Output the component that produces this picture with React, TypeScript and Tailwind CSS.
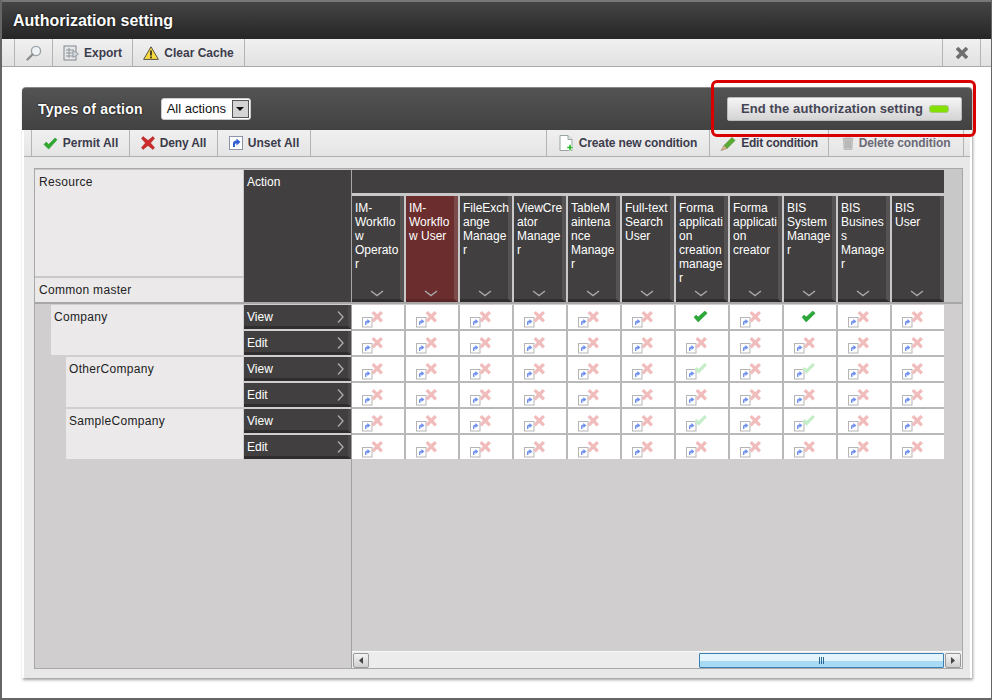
const columns = [
  "IM-Workflow Operator",
  "IM-Workflow User",
  "FileExchange Manager",
  "ViewCreator Manager",
  "TableMaintenance Manager",
  "Full-text Search User",
  "Forma application creation manager",
  "Forma application creator",
  "BIS System Manager",
  "BIS Business Manager",
  "BIS User",
];

const tree = [
  { name: "Company", indent: "ml-[16px]" },
  { name: "OtherCompany", indent: "ml-[31px]" },
  { name: "SampleCompany", indent: "ml-[31px]" },
];

const CheckIcon = ({ className = "" }: { className?: string }) => (
  <svg viewBox="0 0 16 14" className={className}>
    <path d="M1 8l2.5-2.5L6 8l7-7 2 2-9 10z" fill="#2eaa2e" stroke="#1f8a24" strokeWidth="0.6" strokeLinejoin="round" />
  </svg>
);

const CrossIcon = ({ className = "" }: { className?: string }) => (
  <svg viewBox="0 0 14 14" className={className}>
    <path d="M2 0.5L7 4.5 12 0.5 13.5 2.5 9.5 7 13.5 11.5 12 13.5 7 9.5 2 13.5 0.5 11.5 4.5 7 0.5 2.5z" fill="#cc2a2a" stroke="#a81c1c" strokeWidth="0.5" />
  </svg>
);

const UnsetIcon = ({ className = "" }: { className?: string }) => (
  <svg viewBox="0 0 14 14" className={className}>
    <rect x="0.5" y="0.5" width="13" height="13" fill="#fff" stroke="#8d93a8" />
    <path d="M4 11V7.5C4 5.5 5.5 4.5 7.5 4.5V2.5L11.5 6 7.5 9.5V7.2C6.4 7.2 6 8 6 9v2z" fill="#2f5fd0" />
  </svg>
);

const Cell = ({ state }: { state: string }) => (
  <div className="w-[52px] h-[24px] bg-white pl-[10px] pt-[6px]">
    <svg viewBox="0 0 24 17" className="w-[24px] h-[17px]">
      {state !== "check" && (
        <>
          <rect x="0.5" y="6.5" width="9.5" height="9.5" fill="#fff" stroke="#b5b5b5" />
          <path d="M3 14v-2.4c0-1.5 1-2.2 2.4-2.2V8L8.4 10.6 5.4 13v-1.6c-.8 0-1 .5-1 1.2V14z" fill="#6f90f0" />
        </>
      )}
      {state === "x" && (
        <path d="M9.5 2.2L11.8 0 15.2 3.2 18.6 0 21 2.2 17.6 5.6 21 9.2 18.6 11.4 15.2 8 11.8 11.4 9.5 9.2 12.9 5.6z" fill="#f0bcbc" />
      )}
      {state === "faint" && (
        <path d="M8.5 6.2L10.6 4 12.6 6 18.6 0 21 2 12.6 10.8z" fill="#c4eec8" />
      )}
      {state === "check" && (
        <path d="M8 6.2L10.2 4 12.2 6 18.8 0 21.2 2.2 12.2 11z" fill="#2aa838" stroke="#1c8c2c" strokeWidth="0.5" />
      )}
    </svg>
  </div>
);

const cellState = (row: number, col: number) => {
  if (col !== 6 && col !== 8) return "x";
  if (row === 0) return "check";
  if (row === 2 || row === 4) return "faint";
  return "x";
};

const ToolItem = ({ icon, label, className = "" }: { icon: React.ReactNode; label?: string; className?: string }) => (
  <div className={`h-full flex items-center justify-center gap-[5px] border-r border-[#b4b4b4] text-[12px] font-bold text-[#3c3c4c] ${className}`}>
    {icon}
    {label && <span>{label}</span>}
  </div>
);

const ActionButton = ({ label }: { label: string }) => (
  <div className="w-[107px] h-[24px] bg-[#413f40] border-b-[3px] border-r-[3px] border-b-[#2f2d2e] border-r-[#4c4a4b] flex items-center justify-between pl-[3px] pr-[4px] pt-[2px] text-[12px] text-white">
    <span>{label}</span>
    <svg viewBox="0 0 7 12" className="w-[7px] h-[12px]">
      <path d="M1 0.5L6 6 1 11.5" fill="none" stroke="#a9a9a9" strokeWidth="1.4" />
    </svg>
  </div>
);

export default function App() {
  return (
    <div className="w-[992px] h-[700px] flex flex-col bg-white border-l-2 border-r border-b-2 border-[#666] overflow-hidden font-['Liberation_Sans',Arial,sans-serif]">
      {/* window title */}
      <div className="h-[39px] shrink-0 bg-gradient-to-b from-[#454545] to-[#262626] border-t-2 border-[#777] flex items-center pl-[11px] text-[16px] font-bold text-white [text-shadow:0_0_2px_#000]">
        Authorization setting
      </div>

      {/* window toolbar */}
      <div className="h-[28px] shrink-0 bg-gradient-to-b from-[#f0f0f0] to-[#e2e2e2] border-b border-[#aaa] flex pl-[12px]">
        <ToolItem
          className="w-[39px] border-l"
          icon={
            <svg viewBox="0 0 16 16" className="w-[16px] h-[16px]">
              <circle cx="10" cy="6" r="4.6" fill="#eef2f5" stroke="#9aa3a8" strokeWidth="1.4" />
              <path d="M6.5 9.5L1.5 14.5" stroke="#8e8e8e" strokeWidth="2.4" strokeLinecap="round" />
            </svg>
          }
        />
        <ToolItem
          className="w-[80px]"
          label="Export"
          icon={
            <svg viewBox="0 0 16 16" className="w-[16px] h-[16px]">
              <rect x="1" y="1" width="12" height="14" fill="#e8e8e8" stroke="#808890" />
              <path d="M3 5h8M3 8h8M3 11h8M6 3v10" stroke="#8c949c" />
              <path d="M10 5.5L15.5 9 10 12.5z" fill="#d6dade" stroke="#7c848c" strokeWidth="0.7" />
            </svg>
          }
        />
        <ToolItem
          className="w-[112px]"
          label="Clear Cache"
          icon={
            <svg viewBox="0 0 16 14" className="w-[16px] h-[14px]">
              <path d="M8 0.8L15.4 13.4H0.6z" fill="#f7d83e" stroke="#55534a" strokeLinejoin="round" />
              <path d="M8 4.5v5M8 10.6v1.6" stroke="#222" strokeWidth="1.6" />
            </svg>
          }
        />
        <div className="flex-1" />
        <ToolItem
          className="w-[39px] border-l mr-[10px]"
          icon={
            <svg viewBox="0 0 14 14" className="w-[14px] h-[14px]">
              <path d="M2 2l10 10M12 2L2 12" stroke="#6e6e6e" strokeWidth="3.6" />
            </svg>
          }
        />
      </div>

      {/* page body */}
      <div className="flex-1 pt-[20px] pl-[20px] pr-[19px] pb-[20px]">
        <div className="relative h-[591px] flex flex-col rounded-t-[4px] shadow-[1px_2px_3px_#a0a0a0]">
          {/* panel header */}
          <div className="h-[43px] shrink-0 rounded-t-[4px] bg-gradient-to-b from-[#535353] to-[#424242] border-t border-[#888] flex items-center pl-[16px] pr-[10px]">
            <span className="text-[14px] font-bold tracking-[0.2px] text-white [text-shadow:0_0_2px_#000]">Types of action</span>
            <div className="ml-[18px] w-[90px] h-[22px] bg-white rounded-[3px] border border-[#ccc] flex items-center justify-between pl-[5px] pr-[1px] text-[13px] text-[#111]">
              <span>All actions</span>
              <div className="w-[17px] h-[18px] bg-[#d4d4d4] border border-[#555] flex items-center justify-center">
                <svg viewBox="0 0 8 4" className="w-[8px] h-[4px]">
                  <path d="M0 0h8L4 4z" fill="#111" />
                </svg>
              </div>
            </div>
            <div className="flex-1" />
            <div className="w-[235px] h-[24px] rounded-[2px] bg-gradient-to-b from-[#f5f5f5] to-[#d4d4d4] border border-[#bbb] flex items-center pl-[13px] text-[13px] font-bold tracking-[0.1px] text-[#444454]">
              <span>End the authorization setting</span>
              <span className="ml-[6px] w-[20px] h-[8px] rounded-[3px] bg-[#84e000] border border-[#a8c880]" />
            </div>
          </div>

          {/* panel content */}
          <div className="flex-1 mx-[2px] bg-[#e8e8e8] flex flex-col">
            <div className="h-[27px] shrink-0 bg-gradient-to-b from-[#f0f0f0] to-[#e4e4e4] border-b border-[#b0b0b0] flex pl-[7px] pr-[6px]">
              <ToolItem className="w-[99px] border-l" label="Permit All" icon={<CheckIcon className="w-[15px] h-[13px]" />} />
              <ToolItem className="w-[88px] tracking-[-0.15px]" label="Deny All" icon={<CrossIcon className="w-[14px] h-[14px]" />} />
              <ToolItem className="w-[93px]" label="Unset All" icon={<UnsetIcon className="w-[14px] h-[14px]" />} />
              <div className="flex-1" />
              <ToolItem
                className="w-[164px] border-l tracking-[-0.15px]"
                label="Create new condition"
                icon={
                  <svg viewBox="0 0 15 17" className="w-[15px] h-[17px]">
                    <path d="M1 0.5h8l4 4v11H1z" fill="#fff" stroke="#98a4a4" />
                    <path d="M9 0.5v4h4" fill="#e4eaea" stroke="#98a4a4" />
                    <path d="M10 9.5h2v2h2v2h-2v2h-2v-2H8v-2h2z" fill="#28b428" stroke="#fff" strokeWidth="0.5" />
                  </svg>
                }
              />
              <ToolItem
                className="w-[119px] tracking-[-0.25px]"
                label="Edit condition"
                icon={
                  <svg viewBox="0 0 16 15" className="w-[16px] h-[15px]">
                    <path d="M4 9.5L12 1.5l3 3-8 8z" fill="#58ac32" stroke="#3a8a22" strokeWidth="0.6" />
                    <path d="M4 9.5l3 3-6 2z" fill="#d8b88a" stroke="#8a7050" strokeWidth="0.5" />
                  </svg>
                }
              />
              <ToolItem
                className="w-[135px] tracking-[-0.1px] text-[#6a6a76]"
                label="Delete condition"
                icon={
                  <svg viewBox="0 0 12 14" className="w-[12px] h-[14px]">
                    <path d="M0.5 2h11v1.5H0.5z" fill="#b4b4b4" />
                    <path d="M4 2V0.8h4V2" fill="none" stroke="#b4b4b4" />
                    <path d="M1.5 4h9L10 13.5H2z" fill="#c8c8c8" stroke="#a8a8a8" strokeWidth="0.6" />
                    <path d="M4 5v7M6 5v7M8 5v7" stroke="#a0a0a0" strokeWidth="0.8" />
                  </svg>
                }
              />
            </div>

            {/* table */}
            <div className="flex-1 mt-[11px] mb-[9px] ml-[10px] mr-[7px] border border-[#a8a8a8] bg-[#d0cecf] flex flex-col text-[12px]">
              <div className="h-[135px] shrink-0 flex border-b-2 border-[#a8a8a8] bg-[#c8c8c8]">
                <div className="w-[208px] flex flex-col gap-[2px] pt-[1px] text-[#222] tracking-[0.3px]">
                  <div className="flex-1 bg-[#ebe9ea] pl-[4px] pt-[3px]">Resource</div>
                  <div className="h-[24px] bg-[#ebe9ea] pl-[4px] flex items-center">Common master</div>
                </div>
                <div className="ml-[1px] w-[108px] mt-[1px] bg-[#413f40] text-white pl-[3px] pt-[3px] border-r border-[#a8a8a8]">Action</div>
                <div className="flex-1 flex flex-col gap-[3px] pt-[1px]">
                  <div className="h-[23px] w-[592px] bg-[#413f40]" />
                  <div className="flex gap-[2px]">
                    {columns.map((c, i) => (
                      <div
                        key={c}
                        className={`w-[52px] h-[106px] flex flex-col border-b-[3px] border-r-[4px] ${i === 1 ? "bg-[#6b2d2d] border-r-[#7b4a4a] border-b-[#5a2626]" : "bg-[#413f40] border-r-[#555354] border-b-[#2f2d2e]"}`}
                      >
                        {/* header text runs over the lighter strip on the right */}
                        <div className={`flex-1 ml-[3px] pt-[5px] leading-[14px] text-white [overflow-wrap:anywhere] ${i === 4 ? "w-[44px]" : "w-[46.4px]"}`}>{c}</div>
                        <svg viewBox="0 0 14 7" className="w-[14px] h-[7px] ml-[18px] mb-[2px]">
                          <path d="M1 1l6 4.5L13 1" fill="none" stroke="#a9a9a9" strokeWidth="1.4" />
                        </svg>
                      </div>
                    ))}
                  </div>
                </div>
              </div>

              <div className="flex-1 flex pt-[1px]">
                <div className="w-[317px] shrink-0 border-r border-[#a0a0a0]">
                  <div className="flex flex-col gap-[2px]">
                    {tree.map((t) => (
                      <div key={t.name} className="flex justify-between h-[50px]">
                        <div className={`flex-1 bg-[#ebe9ea] pl-[3px] pt-[3px] text-[#222] tracking-[0.3px] ${t.indent}`}>{t.name}</div>
                        <div className="flex flex-col gap-[2px] ml-[1px]">
                          <ActionButton label="View" />
                          <ActionButton label="Edit" />
                        </div>
                      </div>
                    ))}
                  </div>
                </div>
                <div className="flex-1 flex flex-col justify-between">
                  <div className="w-[592px] bg-[#b9b9b9] flex flex-col gap-[2px]">
                    {[0, 1, 2, 3, 4, 5].map((r) => (
                      <div key={r} className="flex gap-[2px]">
                        {columns.map((c, i) => (
                          <Cell key={c} state={cellState(r, i)} />
                        ))}
                      </div>
                    ))}
                  </div>

                  {/* horizontal scrollbar */}
                  <div className="h-[17px] bg-[#ececec] border-t border-[#fafafa] flex items-center px-[1px]">
                    <div className="w-[16px] h-[15px] rounded-[2px] bg-gradient-to-b from-[#f4f4f4] to-[#cfcfcf] border border-[#9a9a9a] flex items-center justify-center">
                      <svg viewBox="0 0 4 7" className="w-[4px] h-[7px]">
                        <path d="M4 0v7L0 3.5z" fill="#444" />
                      </svg>
                    </div>
                    <div className="flex-1" />
                    <div className="w-[245px] h-[15px] rounded-[1px] border border-[#3c7fb1] bg-gradient-to-b from-[#e3f4fc] from-50% to-[#a8daf6] to-50% flex items-center justify-center gap-[1px]">
                      <span className="w-[1px] h-[7px] bg-[#2a6a94]" />
                      <span className="w-[1px] h-[7px] bg-[#2a6a94]" />
                      <span className="w-[1px] h-[7px] bg-[#2a6a94]" />
                    </div>
                    <div className="ml-[1px] w-[16px] h-[15px] rounded-[2px] bg-gradient-to-b from-[#f4f4f4] to-[#cfcfcf] border border-[#9a9a9a] flex items-center justify-center">
                      <svg viewBox="0 0 4 7" className="w-[4px] h-[7px]">
                        <path d="M0 0v7L4 3.5z" fill="#444" />
                      </svg>
                    </div>
                  </div>
                </div>
              </div>
            </div>
          </div>

          {/* red highlight */}
          <div className="absolute left-[689px] top-[-7px] w-[265px] h-[57px] border-[3px] border-[#d80000] rounded-[6px]" />
        </div>
      </div>
    </div>
  );
}
